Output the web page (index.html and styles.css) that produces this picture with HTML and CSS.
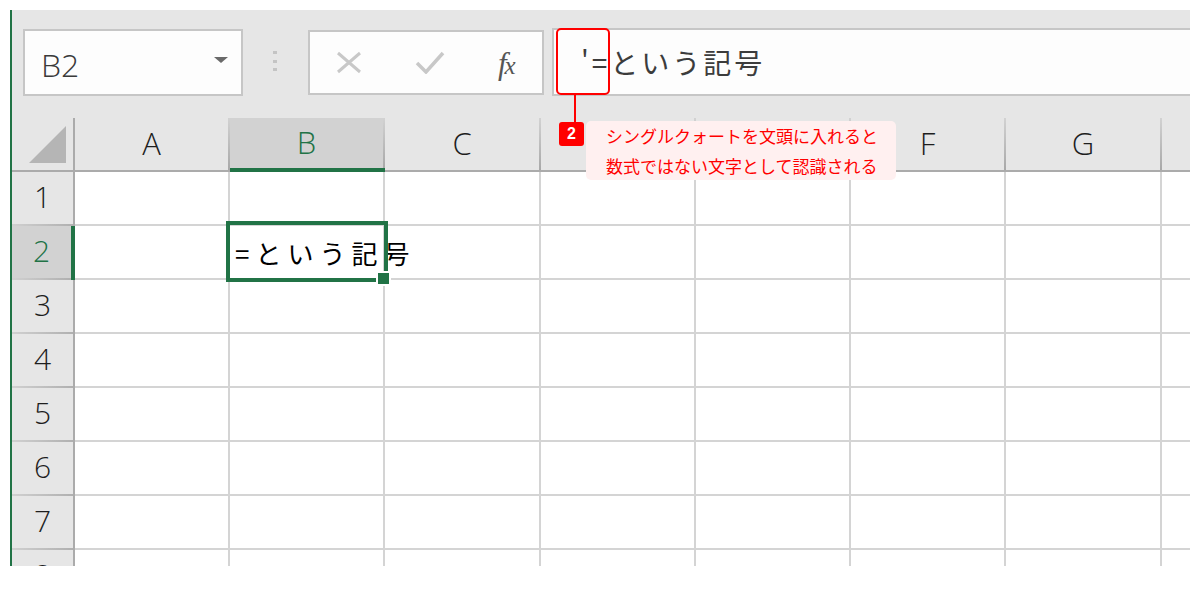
FILE: index.html
```html
<!DOCTYPE html>
<html lang="ja">
<head>
<meta charset="utf-8">
<title>Excel</title>
<link rel="stylesheet" href="styles.css">
</head>
<body>
<div class="app">
  <div class="toolbar">
    <div class="namebox"><span class="ref">B2</span><span class="caret"></span></div>
    <div class="grip"><i></i><i></i><i></i></div>
    <div class="fxbox">
      <svg class="ico" width="26" height="23" viewBox="0 0 26 23"><path d="M2 2 L24 21 M24 2 L2 21" stroke="#c8c8c8" stroke-width="3" fill="none"/></svg>
      <svg class="ico" width="30" height="23" viewBox="0 0 30 23"><polyline points="2,12 11,21 28,2" stroke="#c8c8c8" stroke-width="3.5" fill="none"/></svg>
      <span class="fx"><span class="fx-f">f</span><span class="fx-x">x</span></span>
    </div>
    <div class="formula">'=という記号</div>
  </div>
  <div class="sheet">
    <div class="corner"><span class="tri"></span></div>
    <div class="ch">A</div>
    <div class="ch sel">B</div>
    <div class="ch">C</div>
    <div class="ch">D</div>
    <div class="ch">E</div>
    <div class="ch">F</div>
    <div class="ch">G</div>
    <div class="ch"></div>

    <div class="rh">1</div>
    <div class="c"></div><div class="c"></div><div class="c"></div><div class="c"></div><div class="c"></div><div class="c"></div><div class="c"></div><div class="c"></div>

    <div class="rh sel">2</div>
    <div class="c"></div>
    <div class="c active"><span class="val">=という記号</span><span class="handle"></span></div>
    <div class="c"></div><div class="c"></div><div class="c"></div><div class="c"></div><div class="c"></div><div class="c"></div>

    <div class="rh">3</div>
    <div class="c"></div><div class="c"></div><div class="c"></div><div class="c"></div><div class="c"></div><div class="c"></div><div class="c"></div><div class="c"></div>

    <div class="rh">4</div>
    <div class="c"></div><div class="c"></div><div class="c"></div><div class="c"></div><div class="c"></div><div class="c"></div><div class="c"></div><div class="c"></div>

    <div class="rh">5</div>
    <div class="c"></div><div class="c"></div><div class="c"></div><div class="c"></div><div class="c"></div><div class="c"></div><div class="c"></div><div class="c"></div>

    <div class="rh">6</div>
    <div class="c"></div><div class="c"></div><div class="c"></div><div class="c"></div><div class="c"></div><div class="c"></div><div class="c"></div><div class="c"></div>

    <div class="rh">7</div>
    <div class="c"></div><div class="c"></div><div class="c"></div><div class="c"></div><div class="c"></div><div class="c"></div><div class="c"></div><div class="c"></div>

    <div class="rh">8</div>
    <div class="c"></div><div class="c"></div><div class="c"></div><div class="c"></div><div class="c"></div><div class="c"></div><div class="c"></div><div class="c"></div>
  </div>

  <div class="callout">
    <div class="mark"></div>
    <div class="leader"></div>
    <div class="label">
      <span class="badge">2</span>
      <div class="note">
        <div class="line">シングルクォートを文頭に入れると</div>
        <div class="line">数式ではない文字として認識される</div>
      </div>
    </div>
  </div>
</div>
</body>
</html>
```

FILE: styles.css
```css
html, body {
  margin: 0;
  padding: 0;
  background: #ffffff;
}

.app {
  position: relative;
  margin: 10px 0 0 10px;
  width: 1178px;
  height: 556px;
  border-left: 2px solid #217346;
  background: #e6e6e6;
  overflow: hidden;
  display: flex;
  flex-direction: column;
  font-family: "Open Sans", "Noto Sans CJK JP", sans-serif;
}

/* ---------- toolbar ---------- */
.toolbar {
  height: 108px;
  flex: none;
  box-sizing: border-box;
  padding: 19px 0 0 11px;
  display: flex;
  align-items: flex-start;
}

.namebox {
  width: 220px;
  height: 67px;
  box-sizing: border-box;
  border: 2px solid #c6c6c6;
  background: #fdfdfd;
  display: flex;
  align-items: center;
  justify-content: space-between;
  padding: 4px 13px 0 16px;
}

.ref {
  font-size: 32px;
  font-weight: 300;
  color: #3a3a3a;
  line-height: normal;
}

.caret {
  width: 0;
  height: 0;
  border-left: 7.5px solid transparent;
  border-right: 7.5px solid transparent;
  border-top: 6px solid #6a6a6a;
  margin-bottom: 9px;
}

.grip {
  margin: 22px 0 0 30px;
  display: flex;
  flex-direction: column;
  gap: 5.5px;
}

.grip i {
  display: block;
  width: 4px;
  height: 3px;
  background: #c4c4c4;
}

.fxbox {
  margin: 1px 0 0 31px;
  width: 236px;
  height: 65px;
  box-sizing: border-box;
  border: 2px solid #c6c6c6;
  background: #fdfdfd;
  display: flex;
  align-items: center;
  justify-content: space-around;
}

.ico {
  display: block;
}

.fx {
  font-family: "Liberation Serif", serif;
  font-style: italic;
  color: #555555;
  line-height: 1;
  display: flex;
  align-items: baseline;
  margin-top: 2px;
}

.fx-f {
  font-size: 31px;
}

.fx-x {
  font-size: 25px;
  margin-left: -2px;
}

.formula {
  margin: -1px 0 0 8px;
  flex: 1;
  height: 68px;
  box-sizing: border-box;
  border: 2px solid #c6c6c6;
  border-right: none;
  background: #fdfdfd;
  display: flex;
  align-items: center;
  padding-left: 27px;
  font-family: "Noto Sans CJK JP", sans-serif;
  font-size: 28px;
  letter-spacing: 3px;
  color: #3c3c3c;
  white-space: nowrap;
}

/* ---------- sheet ---------- */
.sheet {
  flex: 1;
  min-height: 0;
  display: grid;
  grid-template-columns: 63px 155px 155px 156px 155px 155px 155px 156px 60px;
  grid-auto-rows: 54px;
  background: #ffffff;
}

.sheet > div {
  box-sizing: border-box;
}

.corner {
  background: #e6e6e6;
  border-right: 2px solid #ababab;
  border-bottom: 2px solid #ababab;
  display: flex;
  justify-content: flex-end;
  align-items: flex-end;
  padding: 0 7px 7px 0;
}

.tri {
  width: 37px;
  height: 37px;
  background: #b5b5b5;
  clip-path: polygon(100% 0, 100% 100%, 0 100%);
}

.ch {
  background: linear-gradient(#d2d2d2, #a8a8a8) right top / 2px 100% no-repeat, #e6e6e6;
  border-bottom: 2px solid #ababab;
  display: flex;
  align-items: center;
  justify-content: center;
  padding: 0 2px 3px 0;
  font-size: 31px;
  font-weight: 300;
  color: #1e1e1e;
}

.ch.sel {
  background-color: #d2d2d2;
  border-bottom: 4px solid #217346;
  color: #217346;
}

.rh {
  background: linear-gradient(to right, #d0d0d0, #b0b0b0) left bottom / 100% 2px no-repeat, #e6e6e6;
  border-right: 2px solid #ababab;
  display: flex;
  align-items: center;
  justify-content: center;
  padding: 0 0 5px 0;
  font-size: 30px;
  font-weight: 300;
  color: #1e1e1e;
}

.rh.sel {
  background-color: #d2d2d2;
  border-right: 4px solid #217346;
  color: #217346;
}

.c {
  border-right: 2px solid #d4d4d4;
  border-bottom: 2px solid #d4d4d4;
}

.c.active {
  position: relative;
  display: flex;
  align-items: center;
  padding-left: 5px;
  white-space: nowrap;
  font-family: "Noto Sans CJK JP", sans-serif;
  font-size: 26px;
  letter-spacing: 6px;
  color: #000000;
}

.c.active::after {
  content: "";
  position: absolute;
  left: -4px;
  top: -5px;
  right: -5px;
  bottom: -4px;
  border: 4px solid #217346;
}

.handle {
  position: absolute;
  left: 146px;
  top: 45px;
  width: 11px;
  height: 11px;
  background: #217346;
  border: 2px solid #ffffff;
  z-index: 1;
}

/* ---------- callout ---------- */
.callout {
  position: absolute;
  left: 544px;
  top: 18px;
  display: flex;
  flex-direction: column;
  align-items: flex-start;
}

.mark {
  width: 54px;
  height: 67px;
  box-sizing: border-box;
  border: 2px solid #ff0000;
  border-radius: 5px;
}

.leader {
  width: 2px;
  height: 27px;
  margin-left: 18px;
  background: #ff0000;
}

.label {
  display: flex;
  align-items: flex-start;
  margin-left: 3px;
}

.badge {
  width: 25px;
  height: 24px;
  background: #ff0000;
  color: #ffffff;
  border-radius: 3px;
  display: flex;
  align-items: center;
  justify-content: center;
  font-family: "Liberation Sans", sans-serif;
  font-weight: bold;
  font-size: 16px;
}

.note {
  margin: -1px 0 0 2px;
  width: 310px;
  height: 59px;
  box-sizing: border-box;
  padding: 0 0 0 20px;
  background: #fff0f0;
  border-radius: 5px;
  color: #ff0000;
  font-family: "Noto Sans CJK JP", sans-serif;
  font-size: 17px;
  white-space: nowrap;
  display: flex;
  flex-direction: column;
}

.note .line {
  height: 29.5px;
  line-height: 29.5px;
}
```
